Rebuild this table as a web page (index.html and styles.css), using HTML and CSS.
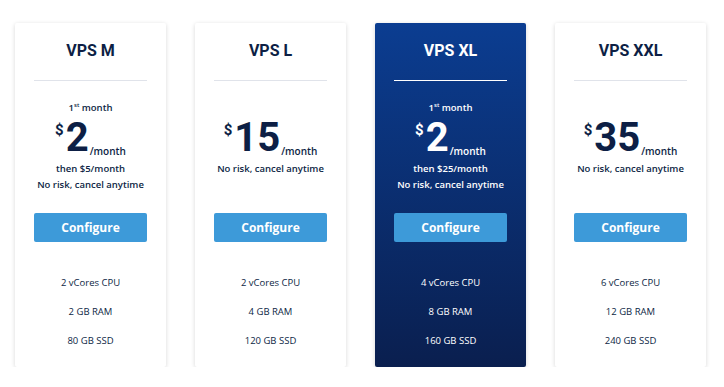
FILE: index.html
```html
<!DOCTYPE html>
<html lang="en">
<head>
<meta charset="utf-8">
<title>VPS Plans</title>
<link rel="stylesheet" href="styles.css">
</head>
<body>
<div class="plans">
  <div class="card">
    <h2 class="title">VPS M</h2>
    <div class="divider"></div>
    <div class="pricing">
      <div class="first">1<sup>st</sup> month</div>
      <div class="price"><span class="cur">$</span><span class="amt">2</span><span class="per">/month</span></div>
      <div class="note">then $5/month</div>
      <div class="note">No risk, cancel anytime</div>
    </div>
    <a class="btn">Configure</a>
    <ul class="features">
      <li>2 vCores CPU</li>
      <li>2 GB RAM</li>
      <li>80 GB SSD</li>
    </ul>
  </div>
  <div class="card">
    <h2 class="title">VPS L</h2>
    <div class="divider"></div>
    <div class="pricing">
      <div class="first"></div>
      <div class="price"><span class="cur">$</span><span class="amt">15</span><span class="per">/month</span></div>
      <div class="note">No risk, cancel anytime</div>
    </div>
    <a class="btn">Configure</a>
    <ul class="features">
      <li>2 vCores CPU</li>
      <li>4 GB RAM</li>
      <li>120 GB SSD</li>
    </ul>
  </div>
  <div class="card featured">
    <h2 class="title">VPS XL</h2>
    <div class="divider"></div>
    <div class="pricing">
      <div class="first">1<sup>st</sup> month</div>
      <div class="price"><span class="cur">$</span><span class="amt">2</span><span class="per">/month</span></div>
      <div class="note">then $25/month</div>
      <div class="note">No risk, cancel anytime</div>
    </div>
    <a class="btn">Configure</a>
    <ul class="features">
      <li>4 vCores CPU</li>
      <li>8 GB RAM</li>
      <li>160 GB SSD</li>
    </ul>
  </div>
  <div class="card">
    <h2 class="title">VPS XXL</h2>
    <div class="divider"></div>
    <div class="pricing">
      <div class="first"></div>
      <div class="price"><span class="cur">$</span><span class="amt">35</span><span class="per">/month</span></div>
      <div class="note">No risk, cancel anytime</div>
    </div>
    <a class="btn">Configure</a>
    <ul class="features">
      <li>6 vCores CPU</li>
      <li>12 GB RAM</li>
      <li>240 GB SSD</li>
    </ul>
  </div>
</div>
</body>
</html>
```
FILE: styles.css
```css
html, body {
  margin: 0;
  padding: 0;
  background: #ffffff;
}
body {
  font-family: "Open Sans", "Liberation Sans", sans-serif;
  color: #0d1f45;
}
.plans {
  display: flex;
  gap: 29px;
  padding: 23px 0 0 15px;
}
.card {
  width: 151px;
  height: 344px;
  box-sizing: border-box;
  padding: 18px 19px 0;
  background: #ffffff;
  border-radius: 2px;
  box-shadow: 0 1px 4px rgba(0, 0, 0, 0.16);
  display: flex;
  flex-direction: column;
  text-align: center;
}
.featured {
  background: linear-gradient(to bottom, #0b3d91 0%, #0a1f4f 100%);
  color: #ffffff;
}
.title {
  margin: 0;
  font-family: Roboto, "Liberation Sans", sans-serif;
  font-weight: 700;
  font-size: 16px;
  line-height: 20px;
}
.divider {
  margin-top: 19px;
  height: 1px;
  background: #e0e3ea;
}
.featured .divider {
  background: #ffffff;
}
.pricing {
  margin-top: 20px;
  height: 92px;
  display: flex;
  flex-direction: column;
}
.first {
  height: 14px;
  font-size: 9.5px;
  line-height: 14px;
  font-weight: 600;
}
.first sup {
  font-size: 6px;
  line-height: 0;
}
.price {
  margin-top: 3px;
  height: 40px;
  display: flex;
  justify-content: center;
  align-items: flex-start;
  font-family: Roboto, "Liberation Sans", sans-serif;
  font-weight: 700;
}
.cur {
  font-size: 15px;
  line-height: 16px;
  margin-top: 4px;
  margin-right: 2px;
}
.amt {
  font-size: 40px;
  line-height: 40px;
}
.per {
  align-self: flex-end;
  font-family: "Open Sans", "Liberation Sans", sans-serif;
  font-weight: 600;
  font-size: 10px;
  line-height: 14px;
  margin-left: 1px;
}
.note {
  font-size: 9.5px;
  line-height: 16px;
  font-weight: 600;
}
.price + .note {
  margin-top: 3px;
}
.btn {
  display: block;
  margin-top: 20px;
  height: 29px;
  line-height: 29px;
  background: #3d9ad9;
  color: #ffffff;
  border-radius: 2px;
  font-weight: 700;
  font-size: 12px;
}
.features {
  list-style: none;
  margin: 0;
  padding: 26px 0 0;
}
.features li {
  height: 29px;
  line-height: 29px;
  font-size: 9.5px;
}
```
